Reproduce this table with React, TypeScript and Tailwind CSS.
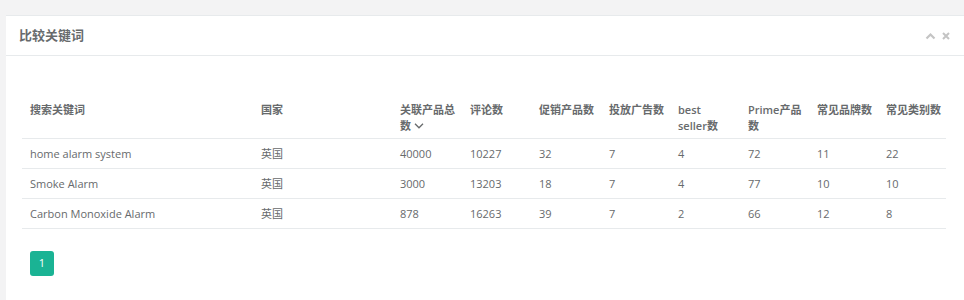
import React from 'react';

const cols = [
  { label: ['搜索关键词'], w: 'w-[231px]' },
  { label: ['国家'], w: 'w-[139px]' },
  { label: ['关联产品总', '数'], w: 'w-[70px]', sort: true },
  { label: ['评论数'], w: 'w-[69px]' },
  { label: ['促销产品数'], w: 'w-[70px]' },
  { label: ['投放广告数'], w: 'w-[69px]' },
  { label: ['best', 'seller数'], w: 'w-[70px]' },
  { label: ['Prime产品', '数'], w: 'w-[69px]' },
  { label: ['常见品牌数'], w: 'w-[69px]' },
  { label: ['常见类别数'], w: 'w-[68px]' },
];

const rows = [
  ['home alarm system', '英国', '40000', '10227', '32', '7', '4', '72', '11', '22'],
  ['Smoke Alarm', '英国', '3000', '13203', '18', '7', '4', '77', '10', '10'],
  ['Carbon Monoxide Alarm', '英国', '878', '16263', '39', '7', '2', '66', '12', '8'],
];

export default function App() {
  return (
    <div className="w-[964px] h-[300px] bg-[#f3f3f4] pt-[15px] pl-[6px] overflow-hidden font-['Open_Sans','Noto_Sans_CJK_SC',sans-serif] text-[#676a6c]">
      <div className="bg-white border-t border-[#e7eaec] h-full">
        {/* title bar */}
        <div className="h-[40px] flex items-center justify-between px-[13px] border-b border-[#e7eaec]">
          <h5 className="text-[13px] font-semibold">比较关键词</h5>
          <div className="flex items-center gap-[6px] text-[#c4c4c4] mr-[1px]">
            <svg width="11" height="8" viewBox="0 0 11 8">
              <path d="M1.5 6.5 L5.5 2.5 L9.5 6.5" stroke="currentColor" strokeWidth="2.2" fill="none" />
            </svg>
            <svg width="8" height="8" viewBox="0 0 8 8">
              <path d="M1 1 L7 7 M7 1 L1 7" stroke="currentColor" strokeWidth="2" fill="none" />
            </svg>
          </div>
        </div>

        <div className="pl-[16px] pt-[36px]">
          <table className="border-collapse table-fixed w-[924px] text-[11px]">
            <thead>
              <tr className="border-b border-[#e7eaec]">
                {cols.map((c) => (
                  <th key={c.label.join('')} className={`${c.w} align-top text-left font-semibold px-[8px] pt-[10px] pb-[4px] leading-[16px] whitespace-nowrap overflow-visible`}>
                    {c.label.map((l, i) => (
                      <div key={i}>
                        {l}
                        {c.sort && i === 1 && (
                          <svg className="inline-block ml-[3px] -mt-[2px]" width="10" height="6" viewBox="0 0 10 6">
                            <path d="M1 0.8 L5 4.8 L9 0.8" stroke="currentColor" strokeWidth="1.3" fill="none" />
                          </svg>
                        )}
                      </div>
                    ))}
                  </th>
                ))}
              </tr>
            </thead>
            <tbody>
              {rows.map((r) => (
                <tr key={r[0]} className="border-b border-[#e7eaec]">
                  {r.map((v, i) => (
                    <td key={i} className="px-[8px] h-[30px] leading-[16px] align-middle">
                      {v}
                    </td>
                  ))}
                </tr>
              ))}
            </tbody>
          </table>

          <div className="pl-[8px] pt-[22px]">
            <button className="w-[24px] h-[25px] rounded-[3px] bg-[#1ab394] text-white text-[11px] flex items-center justify-center">
              1
            </button>
          </div>
        </div>
      </div>
    </div>
  );
}
